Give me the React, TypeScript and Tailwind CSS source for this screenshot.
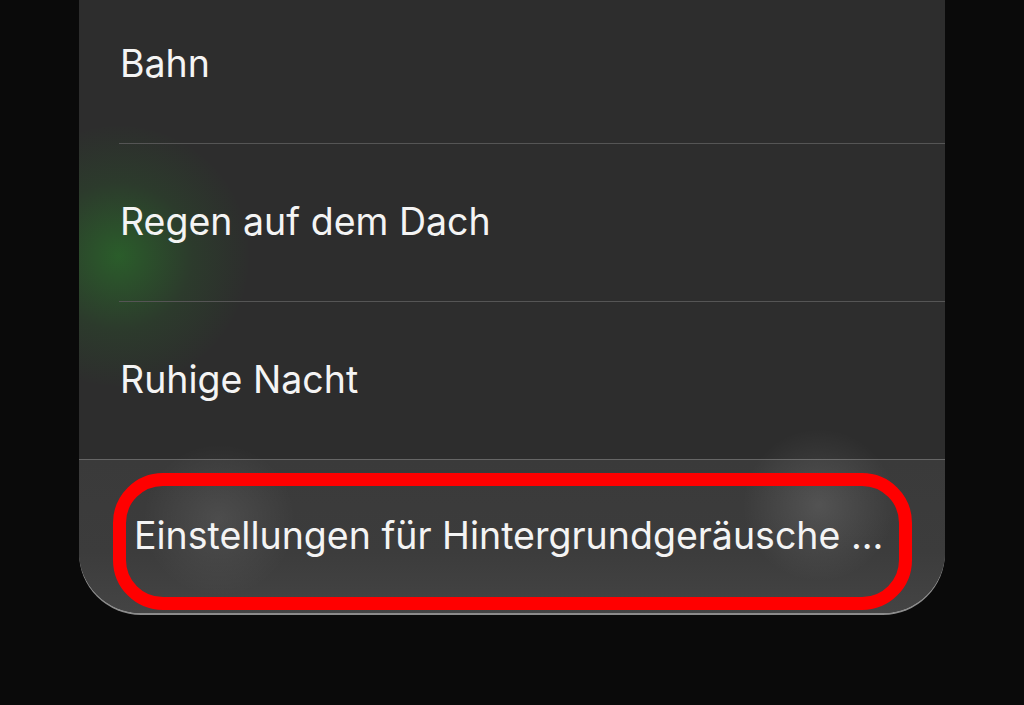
const rows = ["Bahn", "Regen auf dem Dach", "Ruhige Nacht"];

export default function App() {
  return (
    <div
      className="h-[705px] w-[1024px] overflow-hidden bg-[#0a0a0a]"
      style={{ fontFamily: "Inter, 'Noto Sans', sans-serif" }}
    >
      <div className="relative mx-[79px] -mt-[14px] w-[866px] overflow-hidden rounded-b-[62px] bg-[#2d2d2d] shadow-[0_2px_0_#8c8c8c]">
        {/* green glow left */}
        <div className="pointer-events-none absolute left-[-90px] top-[140px] h-[260px] w-[260px] rounded-full bg-[radial-gradient(circle,rgba(40,140,40,0.5)_0%,rgba(40,120,40,0.18)_40%,rgba(40,120,40,0)_72%)]" />

        {rows.map((label, i) => (
          <div key={label} className="relative flex h-[158px] flex-col">
            <div className="flex flex-1 items-center pl-[41px] text-[37.5px] text-[#f4f4f4]">
              {label}
            </div>
            <div
              className={
                i === rows.length - 1
                  ? "h-px bg-[#666]"
                  : "ml-[40px] h-px bg-[#555]"
              }
            />
          </div>
        ))}

        <div className="relative flex h-[153px] items-center bg-[linear-gradient(180deg,#3a3a3a_0%,#3c3c3c_60%,#444_100%)] pl-[55px] text-[37.5px] text-[#f4f4f4]">
          <div className="pointer-events-none absolute left-[50px] top-[-30px] h-[180px] w-[180px] rounded-full bg-[radial-gradient(circle,rgba(255,255,255,0.09)_0%,rgba(255,255,255,0)_60%)]" />
          <div className="pointer-events-none absolute left-[650px] top-[-45px] h-[180px] w-[180px] rounded-full bg-[radial-gradient(circle,rgba(255,255,255,0.12)_0%,rgba(255,255,255,0)_60%)]" />
          <span className="relative">Einstellungen für Hintergrundgeräusche ...</span>
          <div className="pointer-events-none absolute bottom-[3px] left-[34px] right-[33px] top-[13px] rounded-[50px] border-[13px] border-[#ff0000]" />
        </div>
      </div>
    </div>
  );
}
